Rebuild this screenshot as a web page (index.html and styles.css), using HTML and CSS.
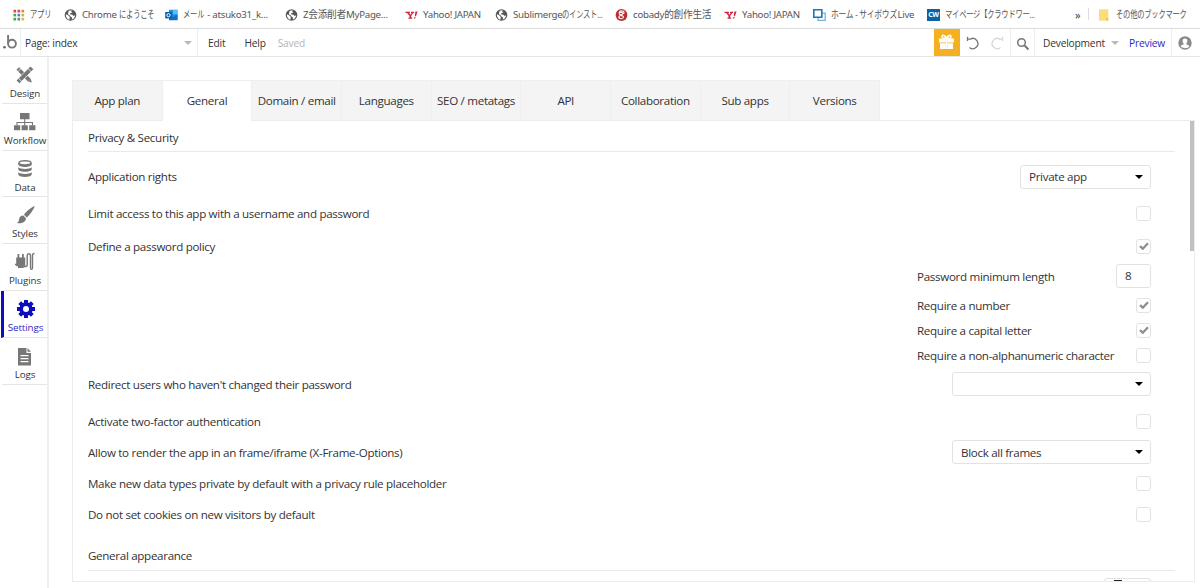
FILE: index.html
```html
<!DOCTYPE html>
<html lang="en">
<head>
  <meta charset="UTF-8">
  <title>index - Settings</title>
  <link rel="stylesheet" href="styles.css">
</head>
<body>
  <svg class="defs" width="0" height="0">
    <symbol id="globe" viewBox="0 0 12 12">
      <circle cx="6" cy="6" r="5.8" fill="#54575b"/>
      <path d="M1.3 5.3l2.3 1 1.7 1.6-.4 2.9C3 10.300 1.300 8.500 1.300 5.300zM4.200 1.800l3-.5-.4 1.500 1.200.8-1.900.5-.8 1.200 2.600.5 1.200 1.300 1.500-.9c-.1 2-1.500 3.700-3.300 4.300l.2-2-1.900-1.200-.6-1.300-1.700-.7z" fill="#fff"/>
    </symbol>
    <symbol id="yahoo" viewBox="0 0 14 12">
      <path d="M.5 2.500h4.800v1.300H4.600l1.200 2 1.500-2H6.500V2.500h3.300v1.300H9L6.700 6.700v2h1V10H3.800V8.700h1V6.800L2.200 3.800H.5zM11.200 2.300h2.300l-1.700 5h-1.200zM10 8.300h1.600l-.5 1.600H9.500z" fill="#d4213d"/>
    </symbol>
    <symbol id="check" viewBox="0 0 10 8">
      <path d="M1 4.200l2.800 2.500L9 1.300" fill="none" stroke="#8e8e8e" stroke-width="2.300"/>
    </symbol>
  </svg>

  <div class="bookmarks">
    <div class="bookmark">
      <svg class="fav" viewBox="0 0 12 12">
        <path d="M1 .8h2.600v2.600H1zM5 .8h2.600v2.600H5z" fill="#dd4b3e"/><path d="M9 .8h2.600v2.600H9z" fill="#e0872f"/>
        <path d="M1 4.800h2.600v2.600H1z" fill="#3ba757"/><path d="M5 4.800h2.600v2.600H5z" fill="#4285d8"/><path d="M9 4.800h2.600v2.600H9z" fill="#e9a93a"/>
        <path d="M1 8.800h2.600v2.600H1zM5 8.800h2.600v2.600H5z" fill="#43a35b"/><path d="M9 8.800h2.600v2.600H9z" fill="#e3b23b"/>
      </svg>
      <span class="label"><span class="kana">アプリ</span></span>
    </div>
    <div class="bookmark"><svg class="fav"><use href="#globe"/></svg><span class="label">Chrome <span class="kana">にようこそ</span></span></div>
    <div class="bookmark">
      <svg class="fav" viewBox="0 0 13 12">
        <path d="M4 .8h8.500v9.800H4z" fill="#1d8bdd"/><path d="M8 .8h4.500v4.500H8z" fill="#4fc1f2"/><path d="M4 5.500l4.300 2.800 4.200-2.800v5.700H4z" fill="#1470be"/>
        <rect x=".2" y="3" width="6.600" height="6.400" fill="#0b5ea9"/><circle cx="3.500" cy="6.200" r="1.600" fill="none" stroke="#fff"/>
      </svg>
      <span class="label"><span class="kana">メール</span><span class="mail-rest">- atsuko31_k...</span></span>
    </div>
    <div class="bookmark"><svg class="fav"><use href="#globe"/></svg><span class="label">Z会添削者MyPage...</span></div>
    <div class="bookmark"><svg class="fav"><use href="#yahoo"/></svg><span class="label">Yahoo! JAPAN</span></div>
    <div class="bookmark"><svg class="fav"><use href="#globe"/></svg><span class="label">Sublimerge<span class="kana">のインスト...</span></span></div>
    <div class="bookmark">
      <svg class="fav" viewBox="0 0 12 12"><circle cx="6" cy="6" r="5.900" fill="#bd2f32"/><path d="M8 2.200c-3-1-4.500.5-4.300 2.300.2 1.500 3.300 1.600 3.500.2.200-1.300-1.700-1.800-2.500-.8M7 6c-2 .2-3.700 1-3.600 2.400.2 1.700 4 1.700 4.500 0C8.200 7 6.800 6.500 5.500 7M8.300 2v3" fill="none" stroke="#fff" stroke-width="1.100"/></svg>
      <span class="label">cobady的創作生活</span>
    </div>
    <div class="bookmark"><svg class="fav"><use href="#yahoo"/></svg><span class="label">Yahoo! JAPAN</span></div>
    <div class="bookmark">
      <svg class="fav" viewBox="0 0 13 12"><path d="M5 4.200h7.200v7.100H5z" fill="#fff" stroke="#74b5dd" stroke-width="1.300"/><path d="M.8.8h8v7.400h-8z" fill="#fff" stroke="#1b78b8" stroke-width="1.600"/></svg>
      <span class="label"><span class="kana wider">ホーム - サイボウズ</span><span class="live-rest">Live</span></span>
    </div>
    <div class="bookmark"><span class="fav cw">CW</span><span class="label"><span class="kana">マイページ【クラウドワー...</span></span></div>
    <div class="more">»</div>
    <div class="bookmark other">
      <svg class="fav" viewBox="0 0 12 12"><path d="M.5.300h9.300v11.300H.5z" fill="#fbdc7c"/><path d="M7.500 9h2.300v2.600H7.500z" fill="#f2c450"/></svg>
      <span class="label"><span class="kana">その他のブックマーク</span></span>
    </div>
  </div>

  <div class="topbar">
    <div class="brand">
      <svg width="15" height="17" viewBox="0 0 15 17"><circle cx="1.500" cy="13.200" r="1.300" fill="#666"/><path d="M5.100 1v8.500" fill="none" stroke="#777" stroke-width="1.900"/><circle cx="9" cy="9.700" r="3.900" fill="none" stroke="#777" stroke-width="1.900"/></svg>
    </div>
    <div class="page-picker">Page: index <span class="caret"></span></div>
    <div class="menu"><span>Edit</span><span>Help</span><span class="saved">Saved</span></div>
    <div class="gift">
      <svg width="17" height="16" viewBox="0 0 17 16"><path d="M1 4.500h6.500v4H1zM9.500 4.500H16v4H9.500zM2 9.300h5.500V15H2zM9.500 9.300H15V15H9.500zM7.700 4.500h1.600V15H7.700z" fill="#fff"/><path d="M8.500 4.300C7.500 1.500 4 0 4 2.700c0 1.500 3 1.600 4.500 1.600s4.500-.1 4.500-1.600c0-2.700-3.500-1.200-4.500 1.600z" fill="none" stroke="#fff" stroke-width="1.500"/></svg>
    </div>
    <div class="history">
      <svg width="13" height="14" viewBox="0 0 13 14"><path d="M1.500 3.100h2.800A5.100 5.100 0 1 1 3.500 11.500M1.500.8v4.300" fill="none" stroke="#777" stroke-width="1.300"/></svg>
      <svg width="13" height="14" viewBox="0 0 13 14"><path d="M11.500 3.100H8.700A5.100 5.100 0 1 0 9.500 11.500M11.500.8v4.300" fill="none" stroke="#d7d7d7" stroke-width="1.300"/></svg>
    </div>
    <div class="search">
      <svg width="14" height="14" viewBox="0 0 14 14"><circle cx="5.500" cy="5.500" r="3.800" fill="none" stroke="#777" stroke-width="1.500"/><path d="M8.500 8.500l4 4" stroke="#777" stroke-width="1.900"/></svg>
    </div>
    <div class="version">Development <span class="caret"></span></div>
    <div class="preview">Preview</div>
    <div class="account">
      <svg width="14" height="14" viewBox="0 0 14 14"><circle cx="7" cy="7" r="6.700" fill="#8a8a8a"/><path d="M7 2.500c3 0 2.900 3.700 1.300 5v.7l2.600 1.200c.5.300.4 1.400 0 1.700-2 1.600-5.800 1.600-7.800 0-.4-.3-.5-1.400 0-1.700l2.600-1.200v-.7C4.100 6.200 4 2.500 7 2.500z" fill="#fff"/></svg>
    </div>
  </div>

  <div class="workspace">
    <div class="sidebar">
      <div class="side-item">
        <svg viewBox="0 0 20 20"><path d="M2.800 3.500l11.500 11.600" stroke="#777" stroke-width="3.800"/><path d="M16.800 17.600l-3.700-1.200 2.600-2.600z" fill="#777"/><path d="M15.200 4.400L5 15" stroke="#fff" stroke-width="5"/><path d="M16.900 2.800L3 16.900" stroke="#777" stroke-width="4"/><path d="M13.200 3.700l3.400 3.400M3.400 13.100l3.400 3.400M2.600 6.900l3.400-3.400" stroke="#fff" stroke-width=".8"/></svg>
        <span>Design</span>
      </div>
      <div class="side-item">
        <svg class="wide" viewBox="0 0 22 20"><path d="M6 1h9.500v6.300H6zM0 13.300h6.200v5H0zM7.600 13.300h6.200v5H7.600zM15.200 13.300h6.200v5h-6.200z" fill="#777"/><path d="M10.700 7v6.500M3 13.500v-3h15.500v3" fill="none" stroke="#777" stroke-width="1.100"/></svg>
        <span>Workflow</span>
      </div>
      <div class="side-item">
        <svg viewBox="0 0 20 20"><path d="M3.300 4v1.500c0 3.300 13.400 3.300 13.400 0V4z" fill="#777"/><ellipse cx="10" cy="3.800" rx="6" ry="2.100" fill="#fff" stroke="#777" stroke-width="1.400"/><path d="M3.300 8.200c2 2.300 11.400 2.300 13.400 0v2.600c-2 2.700-11.400 2.700-13.400 0zM3.300 13.200c2 2.300 11.400 2.300 13.400 0v2.600c-2 2.900-11.400 2.900-13.400 0z" fill="#777"/></svg>
        <span>Data</span>
      </div>
      <div class="side-item">
        <svg viewBox="0 0 20 20"><path d="M19.500 1.300c.7.800-5.500 10-7.800 11.200L9 9.700c1.700-3 9.600-9.300 10.500-8.400zM8.200 10.600l2.700 2.700c.2 3.800-4 5.700-9.200 4.800 2.700-1 1.700-2.600 3-5.500.8-1.500 2.300-2 3.500-2z" fill="#777"/></svg>
        <span>Styles</span>
      </div>
      <div class="side-item">
        <svg viewBox="0 0 20 20"><path d="M1.200 5.500h9v8.700H8.800V16H3v-1.800H1.200zM2.500 2h1.800v4H2.500zM7 2h1.800v4H7z" fill="#777"/><path d="M0 12.500h2M9 14.500h1.500c1.200 0 1.700-.7 1.700-2V4c0-3.200 3.300-3.200 3.300 0v11.500c0 2.500 2 2.500 2 0V3.500c0-1.500.5-2 2-2" fill="none" stroke="#777" stroke-width="1.400"/></svg>
        <span>Plugins</span>
      </div>
      <div class="side-item active">
        <svg viewBox="0 0 20 20"><path d="M10 1v18M1 10h18M3.700 3.700l12.600 12.600M16.300 3.700L3.700 16.300" stroke="#0d0dbd" stroke-width="4"/><circle cx="10" cy="10" r="6.700" fill="#0d0dbd"/><circle cx="10" cy="10" r="3" fill="#fff"/></svg>
        <span>Settings</span>
      </div>
      <div class="side-item logs">
        <svg viewBox="0 0 20 20"><path d="M3 2h8.500v5H16v12.500H3zM12.500 2L16 5.800h-3.500z" fill="#777"/><path d="M5.500 9.700h8M5.500 12.700h8M5.500 15.700h8" stroke="#fff" stroke-width="1.200"/></svg>
        <span>Logs</span>
      </div>
    </div>

    <div class="content">
      <div class="tabs">
        <div class="tab">App plan</div>
        <div class="tab selected">General</div>
        <div class="tab">Domain / email</div>
        <div class="tab">Languages</div>
        <div class="tab">SEO / metatags</div>
        <div class="tab">API</div>
        <div class="tab">Collaboration</div>
        <div class="tab">Sub apps</div>
        <div class="tab">Versions</div>
      </div>

      <div class="panel">
        <div class="settings">
          <h2>Privacy &amp; Security</h2>
          <div class="row first"><span>Application rights</span><div class="select small">Private app</div></div>
          <div class="row"><span>Limit access to this app with a username and password</span><div class="box"></div></div>
          <div class="row policy"><span>Define a password policy</span><div class="box"><svg><use href="#check"/></svg></div></div>
          <div class="sub-rows">
            <div class="row"><span>Password minimum length</span><div class="number">8</div></div>
            <div class="row"><span>Require a number</span><div class="box"><svg><use href="#check"/></svg></div></div>
            <div class="row"><span>Require a capital letter</span><div class="box"><svg><use href="#check"/></svg></div></div>
            <div class="row"><span>Require a non-alphanumeric character</span><div class="box"></div></div>
          </div>
          <div class="row"><span>Redirect users who haven't changed their password</span><div class="select"></div></div>
          <div class="row two-factor"><span>Activate two-factor authentication</span><div class="box"></div></div>
          <div class="row spaced"><span>Allow to render the app in an frame/iframe (X-Frame-Options)</span><div class="select">Block all frames</div></div>
          <div class="row spaced"><span>Make new data types private by default with a privacy rule placeholder</span><div class="box"></div></div>
          <div class="row spaced"><span>Do not set cookies on new visitors by default</span><div class="box"></div></div>
          <h2 class="appearance">General appearance</h2>
          <div class="row cut"><span></span><div class="swatch"><i></i></div></div>
        </div>
        <div class="scroll-thumb"></div>
      </div>
    </div>
  </div>
</body>
</html>
```
FILE: styles.css
```css
* {
  box-sizing: border-box;
}

body {
  margin: 0;
  width: 1200px;
  height: 588px;
  overflow: hidden;
  background: #fff;
  color: #333;
  font-family: "Open Sans", "Noto Sans CJK JP", sans-serif;
  font-size: 11.6px;
  letter-spacing: -0.31px;
}

svg {
  display: block;
  flex: none;
}

.defs {
  position: absolute;
}

/* browser bookmarks */
.bookmarks {
  display: grid;
  grid-template-columns: 52px 101px 120px 120px 90px 120px 109px 89px 114px 148px 23px 102px;
  height: 28px;
  padding-left: 12px;
  align-items: center;
  font-family: "Noto Sans", "Noto Sans CJK JP", sans-serif;
  font-size: 9.7px;
  letter-spacing: -0.27px;
  color: #555;
  white-space: nowrap;
}

.bookmark {
  display: flex;
  align-items: center;
  gap: 5px;
  height: 28px;
  padding-top: 1px;
}

.fav {
  width: 13px;
  height: 12px;
  flex: none;
}

.label {
  line-height: 14px;
}

.kana {
  display: inline-block;
  transform: scaleX(0.75);
  transform-origin: left;
}

.kana.wider {
  transform: scaleX(0.8);
}

.mail-rest {
  margin-left: -4px;
}

.live-rest {
  margin-left: -16px;
}

.cw {
  background: #0864a7;
  color: #fff;
  font-size: 7px;
  font-weight: bold;
  line-height: 12px;
  text-align: center;
}

.more {
  color: #444;
  font-size: 11px;
}

.other {
  position: relative;
}

.other::before {
  content: "";
  position: absolute;
  left: -10px;
  top: 8px;
  height: 12px;
  border-left: 1px solid #ddd;
}

/* editor top bar */
.topbar {
  display: flex;
  height: 29px;
  border-top: 1px solid #dcdcdc;
  border-bottom: 1px solid #e5e5e5;
  font-size: 10.2px;
  letter-spacing: -0.18px;
  line-height: 28px;
}

.brand {
  width: 21px;
  padding: 5px 0 0 3px;
  border-right: 1px solid #eee;
}

.page-picker {
  display: flex;
  align-items: center;
  justify-content: space-between;
  width: 177px;
  padding: 0 5px 0 4px;
  border-right: 1px solid #eee;
}

.caret {
  border: 4px solid transparent;
  border-top-color: #b5bbbb;
  border-bottom: none;
}

.menu {
  display: flex;
  flex: 1;
  gap: 19px;
  padding-left: 10px;
}

.saved {
  margin-left: -7px;
  color: #b5b5b5;
}

.gift {
  width: 26px;
  padding: 5px 0 0 4px;
  background: #f5b021;
}

.history {
  display: flex;
  gap: 12px;
  width: 51px;
  padding: 7px 0 0 6px;
  border-right: 1px solid #eee;
}

.search {
  width: 24px;
  padding: 8px 0 0 5px;
  border-right: 1px solid #eee;
}

.version {
  display: flex;
  align-items: center;
  gap: 6px;
  width: 86px;
  padding-left: 8px;
}

.preview {
  width: 51px;
  padding-left: 8px;
  border-right: 1px solid #eee;
  color: #2a2ac4;
}

.account {
  width: 28px;
  padding: 7px 0 0 6px;
}

/* left navigation */
.workspace {
  display: flex;
  height: 531px;
}

.sidebar {
  width: 49px;
  padding-left: 2px;
  border-right: 2px solid #eee;
}

.side-item {
  display: flex;
  flex-direction: column;
  align-items: center;
  height: 46.8px;
  padding: 8px 0 0 1px;
  border-bottom: 1px solid #e5e5e5;
  font-size: 9.8px;
  letter-spacing: -0.1px;
}

.side-item svg {
  width: 20px;
  height: 20px;
}

.side-item .wide {
  width: 22px;
}

.side-item span {
  margin-top: 2px;
  line-height: 14px;
}

.side-item.active {
  height: 46.8px;
  margin-left: -1px;
  padding-right: 1px;
  border-left: 3px solid #0d0dbd;
  color: #2a2ac4;
}

/* settings */
.content {
  display: flex;
  flex-direction: column;
  width: 1123px;
  height: 525px;
  margin-left: 23px;
  padding-top: 23px;
}

.tabs {
  display: flex;
  width: 808px;
  height: 40px;
}

.tab {
  flex: 1 1 0;
  border: 1px solid #efefef;
  border-left: none;
  border-bottom: none;
  background: #f4f4f4;
  line-height: 40px;
  text-align: center;
  white-space: nowrap;
}

.tab:first-child {
  border-left: 1px solid #efefef;
}

.tab.selected {
  height: 41px;
  background: #fff;
  z-index: 1;
}

.panel {
  display: flex;
  flex: 1;
  justify-content: space-between;
  overflow: hidden;
  border: 1px solid #ececec;
}

.settings {
  width: 1102px;
  padding-left: 15px;
}

.scroll-thumb {
  width: 4px;
  height: 130px;
  background: #c1c1c1;
}

h2 {
  height: 31px;
  margin: 0;
  padding-top: 2px;
  border-bottom: 1px solid #e9e9e9;
  font-size: 11.6px;
  font-weight: normal;
  line-height: 30px;
}

.row {
  display: flex;
  align-items: center;
  justify-content: space-between;
  height: 24px;
  margin-right: 24px;
}

.row.first {
  height: 49px;
}

.policy {
  margin-top: 9px;
}

.sub-rows {
  width: 234px;
  margin: 6px 24px 5px auto;
}

.sub-rows .row {
  margin: 0 0 1px;
}

.sub-rows .row:first-child {
  margin-bottom: 5px;
}

.two-factor {
  margin-top: 13px;
}

.spaced {
  margin-top: 7px;
}

.appearance {
  height: 31px;
  margin-top: 14px;
  padding-top: 1px;
}

.select,
.box,
.number,
.swatch {
  border: 1px solid #e2e2e2;
  border-radius: 3px;
  background: #fff;
}

.select {
  display: flex;
  align-items: center;
  justify-content: space-between;
  width: 199px;
  height: 24px;
  padding: 0 7px 0 8px;
}

.select::after {
  content: "";
  margin-left: auto;
  border: 4px solid transparent;
  border-top-color: #000;
  border-bottom: none;
}

.select.small {
  width: 131px;
}

.box {
  display: flex;
  align-items: center;
  justify-content: center;
  width: 15px;
  height: 15px;
}

.box svg {
  width: 10px;
  height: 8px;
}

.number {
  width: 35px;
  height: 24px;
  padding-left: 8px;
  line-height: 22px;
}

.cut {
  margin-top: 7px;
}

.swatch {
  width: 47px;
  height: 24px;
  padding: 1px 9px;
}

.swatch i {
  display: block;
  width: 8px;
  height: 12px;
  background: #222;
}
```
